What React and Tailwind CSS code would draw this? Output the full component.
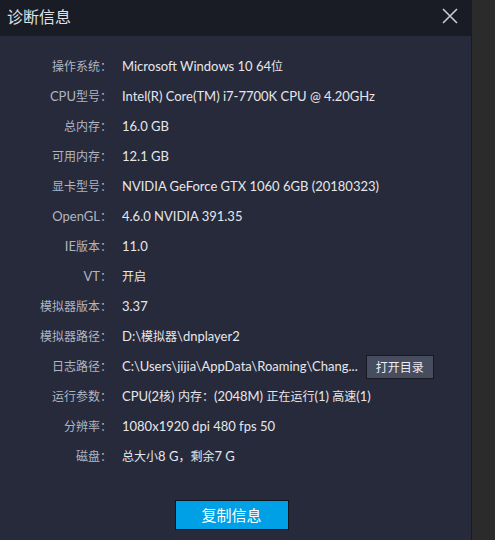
import React from "react";

const rows = [
  ["操作系统：", "Microsoft Windows 10 64位"],
  ["CPU型号：", "Intel(R) Core(TM) i7-7700K CPU @ 4.20GHz"],
  ["总内存：", "16.0 GB"],
  ["可用内存：", "12.1 GB"],
  ["显卡型号：", "NVIDIA GeForce GTX 1060 6GB (20180323)"],
  ["OpenGL：", "4.6.0 NVIDIA 391.35"],
  ["IE版本：", "11.0"],
  ["VT：", "开启"],
  ["模拟器版本：", "3.37"],
  ["模拟器路径：", "D:\\模拟器\\dnplayer2"],
  ["日志路径：", "C:\\Users\\jijia\\AppData\\Roaming\\Chang...", true],
  ["运行参数：", "CPU(2核) 内存：(2048M) 正在运行(1) 高速(1)"],
  ["分辨率：", "1080x1920 dpi 480 fps 50"],
  ["磁盘：", "总大小8 G，剩余7 G"],
];

function Mixed({ text }) {
  const parts = text.split(/([\u3000-\u9fff\uff00-\uffef]+)/).filter(Boolean);
  return (
    <>
      {parts.map((p, i) =>
        /[\u3000-\u9fff\uff00-\uffef]/.test(p) ? (
          <span key={i} className="text-[12px] font-['Noto_Sans_CJK_SC',sans-serif]">
            {p}
          </span>
        ) : (
          <span key={i}>{p}</span>
        )
      )}
    </>
  );
}

export default function App() {
  return (
    <div className="flex w-[495px] h-[540px] bg-[#2b2b2b] overflow-hidden font-[Lato,'Noto_Sans_CJK_SC',sans-serif]">
      <div className="flex flex-col w-[472px] h-full bg-[#262a3a] border-r border-[#1b1b1d]">
        <div className="flex items-center justify-between h-[36px] bg-[#1a1c25] pl-[7px] pr-[13px] pb-[5px]">
          <span className="text-[16px] text-[#dfe1e6] leading-none font-['Noto_Sans_CJK_SC',sans-serif]">
            诊断信息
          </span>
          <svg width="16" height="16" viewBox="0 0 16 16">
            <path d="M1 1 L15 15 M15 1 L1 15" stroke="#c9cbd1" strokeWidth="1.6" />
          </svg>
        </div>
        <div className="flex flex-col pt-[16px]">
          {rows.map(([label, value, btn]) => (
            <div key={label} className="flex items-center h-[30px]">
              <div className="w-[112px] text-right text-[13px] text-[#b1b5c1] whitespace-nowrap">
                <Mixed text={label} />
              </div>
              <div className="ml-[10px] flex items-center text-[13px] text-[#e6e7ea] whitespace-nowrap">
                <span>
                  <Mixed text={value} />
                </span>
                {btn && (
                  <button className="ml-[8px] w-[68px] h-[24px] bg-[#474c5e] border border-[#181a22] text-[12px] text-[#eceef2] flex items-center justify-center font-['Noto_Sans_CJK_SC',sans-serif]">
                    打开目录
                  </button>
                )}
              </div>
            </div>
          ))}
        </div>
        <div className="flex justify-center mt-[28px] pr-[8px]">
          <button className="w-[114px] h-[30px] bg-[#00a0e6] border border-[#10141c] text-[15px] text-white flex items-center justify-center font-['Noto_Sans_CJK_SC',sans-serif]">
            复制信息
          </button>
        </div>
      </div>
    </div>
  );
}
